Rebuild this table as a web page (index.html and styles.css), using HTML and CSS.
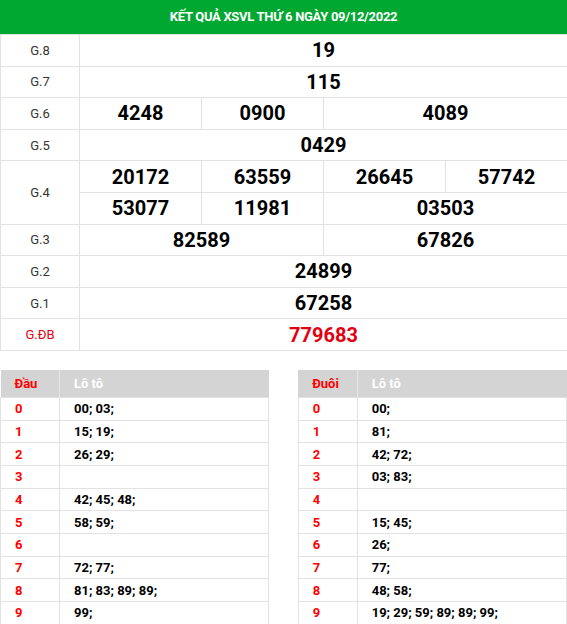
FILE: index.html
```html
<!DOCTYPE html>
<html lang="vi">
<head>
<meta charset="utf-8">
<title>KQ XSVL</title>
<link rel="stylesheet" href="styles.css">
</head>
<body>
<div class="title">KẾT QUẢ XSVL THỨ 6 NGÀY 09/12/2022</div>
<table class="kq">
  <colgroup>
    <col class="c-label"><col class="c-num"><col class="c-num"><col class="c-num"><col class="c-num">
  </colgroup>
  <tr><td class="lbl">G.8</td><td class="num" colspan="4">19</td></tr>
  <tr><td class="lbl">G.7</td><td class="num" colspan="4">115</td></tr>
  <tr><td class="lbl">G.6</td><td class="num">4248</td><td class="num">0900</td><td class="num" colspan="2">4089</td></tr>
  <tr><td class="lbl">G.5</td><td class="num" colspan="4">0429</td></tr>
  <tr><td class="lbl" rowspan="2">G.4</td><td class="num">20172</td><td class="num">63559</td><td class="num">26645</td><td class="num">57742</td></tr>
  <tr><td class="num">53077</td><td class="num">11981</td><td class="num" colspan="2">03503</td></tr>
  <tr><td class="lbl">G.3</td><td class="num" colspan="2">82589</td><td class="num" colspan="2">67826</td></tr>
  <tr><td class="lbl">G.2</td><td class="num" colspan="4">24899</td></tr>
  <tr><td class="lbl">G.1</td><td class="num" colspan="4">67258</td></tr>
  <tr><td class="lbl red">G.ĐB</td><td class="num red" colspan="4">779683</td></tr>
</table>

<div class="loto">
  <table class="lt">
    <colgroup><col class="c-key"><col></colgroup>
    <tr><th class="h-red">Đầu</th><th>Lô tô</th></tr>
    <tr><td>0</td><td>00; 03;</td></tr>
    <tr><td>1</td><td>15; 19;</td></tr>
    <tr><td>2</td><td>26; 29;</td></tr>
    <tr><td>3</td><td></td></tr>
    <tr><td>4</td><td>42; 45; 48;</td></tr>
    <tr><td>5</td><td>58; 59;</td></tr>
    <tr><td>6</td><td></td></tr>
    <tr><td>7</td><td>72; 77;</td></tr>
    <tr><td>8</td><td>81; 83; 89; 89;</td></tr>
    <tr><td>9</td><td>99;</td></tr>
  </table>
  <table class="lt">
    <colgroup><col class="c-key"><col></colgroup>
    <tr><th class="h-red">Đuôi</th><th>Lô tô</th></tr>
    <tr><td>0</td><td>00;</td></tr>
    <tr><td>1</td><td>81;</td></tr>
    <tr><td>2</td><td>42; 72;</td></tr>
    <tr><td>3</td><td>03; 83;</td></tr>
    <tr><td>4</td><td></td></tr>
    <tr><td>5</td><td>15; 45;</td></tr>
    <tr><td>6</td><td>26;</td></tr>
    <tr><td>7</td><td>77;</td></tr>
    <tr><td>8</td><td>48; 58;</td></tr>
    <tr><td>9</td><td>19; 29; 59; 89; 89; 99;</td></tr>
  </table>
</div>
</body>
</html>
```
FILE: styles.css
```css
html, body {
  margin: 0;
  padding: 0;
  background: #fff;
  font-family: Roboto, "Liberation Sans", sans-serif;
  color: #000;
}

.title {
  height: 34px;
  line-height: 34px;
  background: #00a832;
  color: #fff;
  font-weight: bold;
  font-size: 13px;
  text-align: center;
  letter-spacing: -0.3px;
}

.kq {
  width: 567px;
  border-collapse: collapse;
  table-layout: fixed;
}

.kq .c-label { width: 79px; }
.kq .c-num { width: 122px; }

.kq td {
  border: 1px solid #e2e2e2;
  height: 30.6px;
  padding: 0;
  text-align: center;
  vertical-align: middle;
}

.kq .lbl {
  font-size: 13px;
  color: #333;
}

.kq .num {
  font-size: 20px;
  font-weight: bold;
}

.kq .red { color: #e3000f; }

.loto {
  display: flex;
  justify-content: space-between;
  margin-top: 19px;
}

.lt {
  width: 47.5%;
  border-collapse: collapse;
  table-layout: fixed;
  font-size: 13px;
  font-weight: bold;
}

.lt .c-key { width: 22%; }

.lt th {
  background: #d4d4d4;
  color: #fff;
  text-align: left;
  height: 27px;
  padding: 0 0 0 14px;
  border-left: 1px solid #e6e6e6;
}

.lt th:first-child { border-left: 0; }
.lt th.h-red { color: #f00; }

.lt td {
  border: 1px solid #e2e2e2;
  height: 21.7px;
  padding: 0 0 0 14px;
  text-align: left;
}

.lt td:first-child { color: #f00; }
```
